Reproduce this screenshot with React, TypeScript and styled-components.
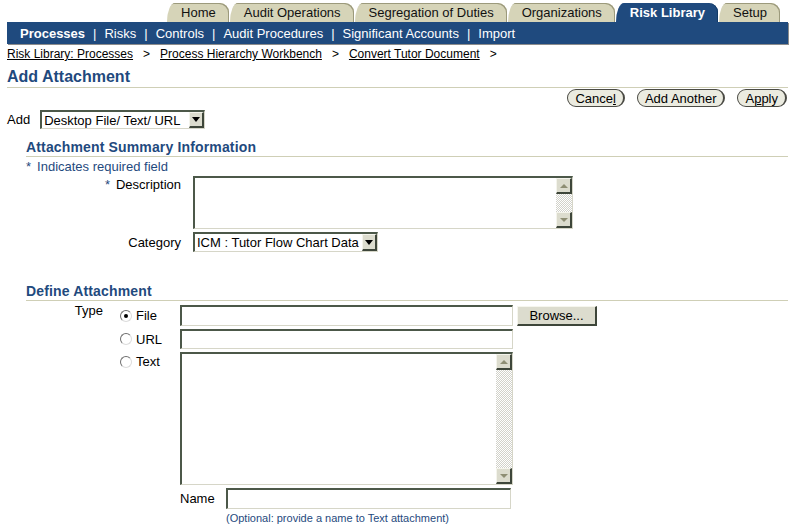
import React from 'react';
import styled, { createGlobalStyle } from 'styled-components';

const BLUE = '#1f4a7e';
const BEIGE = '#d6d4b8';
const RULE = '#cfcfb6';
const DARK_EDGE = '#4c5849';
const LIGHT_EDGE = '#d6d6c8';

const Global = createGlobalStyle`
  html, body { margin: 0; padding: 0; background: #fff; }
  body {
    font-family: "Liberation Sans", Arial, sans-serif;
    font-size: 13px;
    color: #000;
  }
`;

const Page = styled.div`
  width: 796px;
  height: 530px;
  box-sizing: border-box;
  padding: 0 8px 0 7px;
  overflow: hidden;
`;

/* ---------- global tabs ---------- */
const TabRow = styled.div`
  display: flex;
  justify-content: flex-end;
  align-items: flex-end;
  gap: 1px;
  height: 19px;
  margin-top: 3px;
  padding-right: 8px;
`;

const Tab = styled.div<{ $active?: boolean }>`
  height: 19px;
  line-height: 19px;
  padding: 0 13px 0 14px;
  background: ${(p) => (p.$active ? BLUE : BEIGE)};
  color: ${(p) => (p.$active ? '#fff' : '#111')};
  font-weight: ${(p) => (p.$active ? 'bold' : 'normal')};
  border-top-left-radius: 8px 19px;
  border-top-right-radius: 9px;
  box-shadow: ${(p) => (p.$active ? 'inset -1px 0 0 #123a66' : 'inset -1px 1px 0 #9c9a7c')};
  white-space: nowrap;
`;

/* ---------- blue nav ---------- */
const NavBar = styled.div`
  height: 22px;
  background: ${BLUE};
  color: #fff;
  display: flex;
  align-items: center;
  padding-left: 13px;
  box-shadow: 1px 1px 0 #8c8c8c;
`;

const NavItem = styled.span<{ $active?: boolean }>`
  font-weight: ${(p) => (p.$active ? 'bold' : 'normal')};
  white-space: nowrap;
`;

const NavSep = styled.span`
  margin: 0 8px;
`;

/* ---------- breadcrumbs & title ---------- */
const Crumbs = styled.div`
  margin-top: 3px;
  font-size: 12px;
  line-height: 14px;
  display: flex;
  align-items: center;
`;

const Crumb = styled.a`
  color: #000;
  text-decoration: underline;
  white-space: nowrap;
`;

const CrumbSep = styled.span`
  margin: 0 10px 0 10px;
`;

const Title = styled.h1`
  margin: 7px 0 0;
  font-size: 16px;
  line-height: 18px;
  font-weight: bold;
  color: ${BLUE};
  padding-bottom: 1px;
  border-bottom: 1px solid ${RULE};
`;

/* ---------- action buttons ---------- */
const ActionRow = styled.div`
  display: flex;
  justify-content: flex-end;
  gap: 12px;
  margin-top: 1px;
  padding-right: 1px;
`;

const PillButton = styled.button`
  height: 18px;
  box-sizing: border-box;
  padding: 0 7px;
  border: 1px solid #4a4a44;
  border-right-width: 2px;
  border-radius: 9px;
  background: #ebebe0;
  font-family: inherit;
  font-size: 13px;
  line-height: 15px;
  color: #000;
  cursor: pointer;
`;

/* ---------- add row ---------- */
const AddRow = styled.div`
  display: flex;
  align-items: center;
  gap: 10px;
  margin-top: 3px;
`;

const Label = styled.span`
  line-height: 15px;
  white-space: nowrap;
`;

/* ---------- select ---------- */
const SelectBox = styled.div<{ $w: number; $h: number }>`
  width: ${(p) => p.$w}px;
  height: ${(p) => p.$h}px;
  box-sizing: border-box;
  display: flex;
  background: #fff;
  border-top: 2px solid ${DARK_EDGE};
  border-left: 2px solid ${DARK_EDGE};
  border-right: 1px solid ${LIGHT_EDGE};
  border-bottom: 1px solid ${LIGHT_EDGE};
`;

const SelectText = styled.span`
  flex: 1;
  padding-left: 2px;
  display: flex;
  align-items: center;
  white-space: nowrap;
  overflow: hidden;
`;

const SelectArrow = styled.span`
  width: 15px;
  box-sizing: border-box;
  background: #dcdcce;
  border-top: 1px solid #f4f4ec;
  border-left: 1px solid #f4f4ec;
  border-right: 2px solid #3e463a;
  border-bottom: 2px solid #3e463a;
  display: flex;
  align-items: center;
  justify-content: center;
  &::after {
    content: '';
    border-top: 5px solid #000;
    border-left: 4px solid transparent;
    border-right: 4px solid transparent;
  }
`;

/* ---------- sections ---------- */
const Section = styled.section<{ $top: number }>`
  padding-left: 19px;
  margin-top: ${(p) => p.$top}px;
`;

const SectionHeading = styled.h2`
  margin: 0;
  font-size: 14px;
  line-height: 16px;
  font-weight: bold;
  letter-spacing: 0.15px;
  color: ${BLUE};
  padding-bottom: 1px;
  border-bottom: 1px solid ${RULE};
`;

const Required = styled.div`
  margin-top: 2px;
  line-height: 15px;
  color: ${BLUE};
`;

const Star = styled.span`
  color: ${BLUE};
  margin-right: 6px;
`;

const SummaryGrid = styled.div`
  display: grid;
  grid-template-columns: 155px auto;
  column-gap: 12px;
  row-gap: 3px;
  margin-top: 2px;
  align-items: start;
`;

const FieldLabel = styled.div<{ $center?: boolean }>`
  text-align: right;
  line-height: 15px;
  padding-top: ${(p) => (p.$center ? 0 : 1)}px;
  align-self: ${(p) => (p.$center ? 'center' : 'start')};
  white-space: nowrap;
`;

/* ---------- text area with fake scrollbar ---------- */
const AreaBox = styled.div<{ $w: number; $h: number }>`
  width: ${(p) => p.$w}px;
  height: ${(p) => p.$h}px;
  box-sizing: border-box;
  display: flex;
  background: #fff;
  border-top: 2px solid ${DARK_EDGE};
  border-left: 2px solid ${DARK_EDGE};
  border-right: 1px solid ${LIGHT_EDGE};
  border-bottom: 1px solid ${LIGHT_EDGE};
`;

const AreaBody = styled.div`
  flex: 1;
`;

const ScrollBar = styled.div`
  width: 16px;
  display: flex;
  flex-direction: column;
  justify-content: space-between;
  background: repeating-conic-gradient(#d2d2ca 0% 25%, #ffffff 0% 50%) 0 0 / 2px 2px;
`;

const ScrollBtn = styled.div<{ $down?: boolean }>`
  height: 16px;
  box-sizing: border-box;
  background: #dcdcce;
  border-top: 1px solid #f4f4ec;
  border-left: 1px solid #f4f4ec;
  border-right: 2px solid #3e463a;
  border-bottom: 2px solid #3e463a;
  display: flex;
  align-items: center;
  justify-content: center;
  &::after {
    content: '';
    border-left: 4px solid transparent;
    border-right: 4px solid transparent;
    ${(p) =>
      p.$down ? 'border-top: 4px solid #8e8e74;' : 'border-bottom: 4px solid #8e8e74;'}
  }
`;

/* ---------- define attachment ---------- */
const DefineGrid = styled.div`
  display: grid;
  grid-template-columns: 94px 60px auto;
  row-gap: 3px;
  margin-top: 4px;
  align-items: center;
`;

const TypeLabel = styled.div`
  align-self: start;
  margin-top: -2px;
  width: 77px;
  text-align: right;
  line-height: 15px;
`;

const Empty = styled.div``;

const RadioCell = styled.div<{ $top?: boolean }>`
  display: flex;
  align-items: center;
  gap: 4px;
  line-height: 15px;
  align-self: ${(p) => (p.$top ? 'start' : 'center')};
  padding-top: ${(p) => (p.$top ? 2 : 0)}px;
`;

const RadioDot = styled.span<{ $checked?: boolean }>`
  width: 12px;
  height: 12px;
  box-sizing: border-box;
  border-radius: 50%;
  border: 1px solid;
  border-color: #6e6e6e #dcdcdc #dcdcdc #6e6e6e;
  background: #fff;
  display: flex;
  align-items: center;
  justify-content: center;
  &::after {
    content: '';
    width: 4px;
    height: 4px;
    border-radius: 50%;
    background: ${(p) => (p.$checked ? '#000' : 'transparent')};
  }
`;

const FieldRow = styled.div`
  display: flex;
  align-items: center;
  gap: 4px;
`;

const TextInput = styled.div<{ $w: number; $h: number }>`
  width: ${(p) => p.$w}px;
  height: ${(p) => p.$h}px;
  box-sizing: border-box;
  background: #fff;
  border-top: 2px solid ${DARK_EDGE};
  border-left: 2px solid ${DARK_EDGE};
  border-right: 1px solid ${LIGHT_EDGE};
  border-bottom: 1px solid ${LIGHT_EDGE};
`;

const BrowseButton = styled.button`
  width: 80px;
  height: 20px;
  box-sizing: border-box;
  background: #dcdcce;
  border-top: 1px solid #f6f6ee;
  border-left: 1px solid #f6f6ee;
  border-right: 2px solid #3e463a;
  border-bottom: 2px solid #3e463a;
  font-family: inherit;
  font-size: 13px;
  color: #000;
  padding: 0;
  cursor: pointer;
`;

const NameRow = styled.div`
  display: grid;
  grid-template-columns: 46px auto;
  align-items: center;
`;

const Hint = styled.div`
  padding-left: 46px;
  font-size: 11px;
  line-height: 13px;
  color: ${BLUE};
  white-space: nowrap;
`;

const tabs = ['Home', 'Audit Operations', 'Segregation of Duties', 'Organizations', 'Risk Library', 'Setup'];
const navItems = ['Processes', 'Risks', 'Controls', 'Audit Procedures', 'Significant Accounts', 'Import'];
const crumbs = ['Risk Library: Processes', 'Process Hierarchy Workbench', 'Convert Tutor Document'];

function ScrollArea({ w, h }: { w: number; h: number }) {
  return (
    <AreaBox $w={w} $h={h}>
      <AreaBody />
      <ScrollBar>
        <ScrollBtn />
        <ScrollBtn $down />
      </ScrollBar>
    </AreaBox>
  );
}

function Select({ w, h, value }: { w: number; h: number; value: string }) {
  return (
    <SelectBox $w={w} $h={h}>
      <SelectText>{value}</SelectText>
      <SelectArrow />
    </SelectBox>
  );
}

export default function App() {
  return (
    <>
      <Global />
      <Page>
        <TabRow>
          {tabs.map((t) => (
            <Tab key={t} $active={t === 'Risk Library'}>
              {t}
            </Tab>
          ))}
        </TabRow>
        <NavBar>
          {navItems.map((n, i) => (
            <React.Fragment key={n}>
              {i > 0 && <NavSep>|</NavSep>}
              <NavItem $active={i === 0}>{n}</NavItem>
            </React.Fragment>
          ))}
        </NavBar>

        <Crumbs>
          {crumbs.map((c) => (
            <React.Fragment key={c}>
              <Crumb>{c}</Crumb>
              <CrumbSep>&gt;</CrumbSep>
            </React.Fragment>
          ))}
        </Crumbs>

        <Title>Add Attachment</Title>

        <ActionRow>
          <PillButton>
            Cance<u>l</u>
          </PillButton>
          <PillButton>Add Another</PillButton>
          <PillButton>
            A<u>p</u>ply
          </PillButton>
        </ActionRow>

        <AddRow>
          <Label>Add</Label>
          <Select w={165} h={19} value="Desktop File/ Text/ URL" />
        </AddRow>

        <Section $top={10}>
          <SectionHeading>Attachment Summary Information</SectionHeading>
          <Required>
            <Star>*</Star>Indicates required field
          </Required>
          <SummaryGrid>
            <FieldLabel>
              <Star>*</Star>Description
            </FieldLabel>
            <ScrollArea w={380} h={53} />
            <FieldLabel $center>Category</FieldLabel>
            <Select w={185} h={20} value="ICM : Tutor Flow Chart Data" />
          </SummaryGrid>
        </Section>

        <Section $top={31}>
          <SectionHeading>Define Attachment</SectionHeading>
          <DefineGrid>
            <TypeLabel>Type</TypeLabel>
            <RadioCell>
              <RadioDot $checked />
              File
            </RadioCell>
            <FieldRow>
              <TextInput $w={333} $h={21} />
              <BrowseButton>Browse...</BrowseButton>
            </FieldRow>

            <Empty />
            <RadioCell>
              <RadioDot />
              URL
            </RadioCell>
            <TextInput $w={333} $h={20} />

            <Empty />
            <RadioCell $top>
              <RadioDot />
              Text
            </RadioCell>
            <ScrollArea w={333} h={133} />

            <Empty />
            <Empty />
            <NameRow>
              <Label>Name</Label>
              <TextInput $w={285} $h={21} />
            </NameRow>

            <Empty />
            <Empty />
            <Hint>(Optional: provide a name to Text attachment)</Hint>
          </DefineGrid>
        </Section>
      </Page>
    </>
  );
}
